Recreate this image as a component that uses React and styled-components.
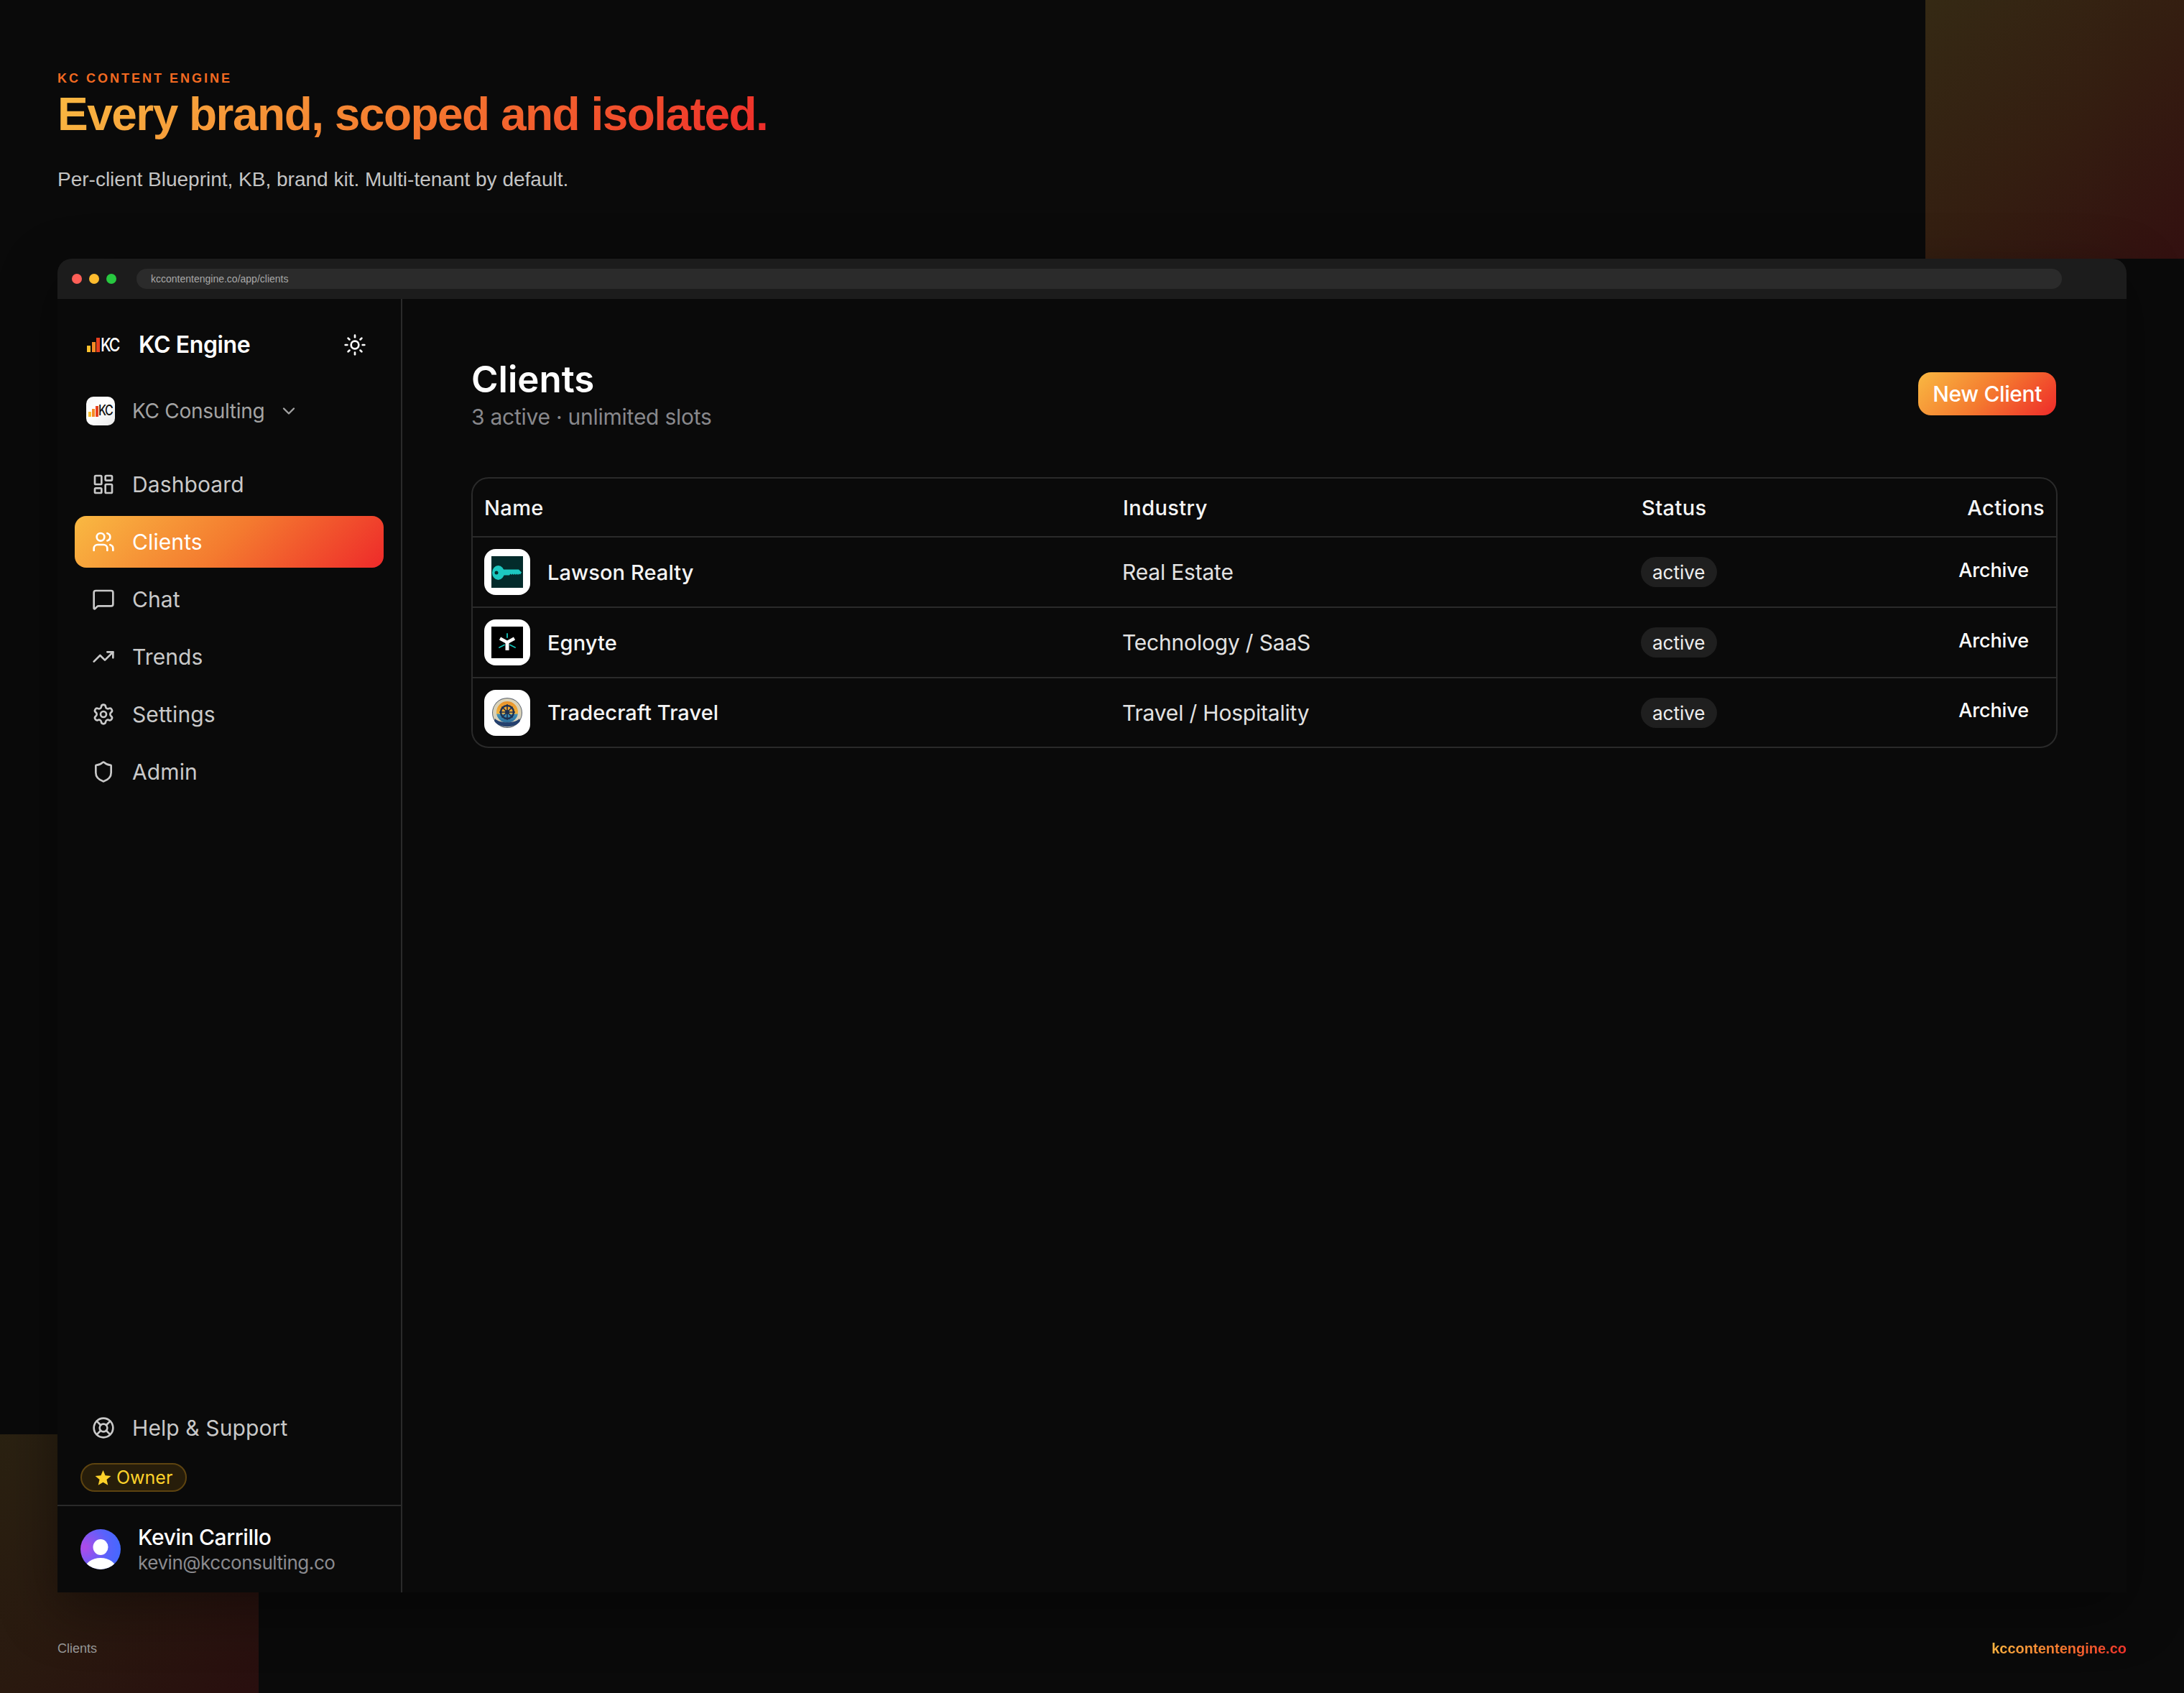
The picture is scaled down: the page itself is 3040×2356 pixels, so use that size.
import styled, { createGlobalStyle } from "styled-components";
import {
  ChevronDown,
  LayoutDashboard,
  LifeBuoy,
  MessageSquare,
  Settings,
  Shield,
  Sun,
  TrendingUp,
  Users,
} from "lucide-react";

const BRAND_GRADIENT = "linear-gradient(135deg, #f9b942 0%, #f47a2f 50%, #ee2a2a 100%)";
const UI_FONT = `Inter, "Noto Sans", sans-serif`;
const PAGE_FONT = `"Liberation Sans", Arial, sans-serif`;

const GlobalStyle = createGlobalStyle`
  * {
    box-sizing: border-box;
  }

  html,
  body {
    margin: 0;
    padding: 0;
    background-color: #0a0a0a;
  }
`;

const Stage = styled.div`
  position: relative;
  width: 3040px;
  height: 2356px;
  overflow: hidden;
  background-color: #0a0a0a;
  display: flex;
  flex-direction: column;
`;

// faint brand squares sitting behind the window
const GlowSquare = styled.div`
  position: absolute;
  width: 360px;
  height: 360px;
  background-image: ${BRAND_GRADIENT};
  opacity: ${(p) => (p.$corner === "top" ? 0.18 : 0.135)};
  ${(p) => (p.$corner === "top" ? "top: 0; right: 0;" : "bottom: 0; left: 0;")}
`;

//------------------------------------------
const Intro = styled.header`
  position: relative;
  height: 360px;
  padding: 98px 80px 0;
  font-family: ${PAGE_FONT};
`;

const Eyebrow = styled.div`
  font-size: 18px;
  line-height: 22px;
  font-weight: 700;
  letter-spacing: 3px;
  color: #f26a21;
`;

const Headline = styled.h1`
  display: inline-block;
  margin: 3px 0 0;
  font-size: 64px;
  line-height: 72px;
  font-weight: 700;
  letter-spacing: -1.52px;
  background-image: ${BRAND_GRADIENT};
  -webkit-background-clip: text;
  background-clip: text;
  color: transparent;
`;

const Lead = styled.p`
  margin: 35px 0 0;
  font-size: 28px;
  line-height: 40px;
  color: #c4c4c4;
`;

//------------------------------------------
const BrowserWindow = styled.div`
  position: relative;
  margin: 0 80px;
  height: 1856px;
  display: flex;
  flex-direction: column;
  background-color: #0a0a0a;
  border-radius: 20px 20px 0 0;
  box-shadow: 0 24px 80px rgba(0, 0, 0, 0.4);
`;

const TitleBar = styled.div`
  height: 56px;
  flex: none;
  display: flex;
  align-items: center;
  gap: 10px;
  padding: 0 90px 0 20px;
  background-color: #1c1c1c;
  border-radius: 20px 20px 0 0;
`;

const Dot = styled.span`
  width: 14px;
  height: 14px;
  border-radius: 50%;
  background-color: ${(p) => p.$color};
`;

const UrlBar = styled.div`
  flex: 1;
  height: 28px;
  margin-left: 18px;
  padding-left: 20px;
  border-radius: 14px;
  background-color: #2b2b2b;
  font-family: ${PAGE_FONT};
  font-size: 14px;
  line-height: 29px;
  color: #a8a8a8;
`;

const AppBody = styled.div`
  flex: 1;
  min-height: 0;
  display: flex;
  font-family: ${UI_FONT};
`;

//------------------------------------------
const Sidebar = styled.aside`
  width: 480px;
  flex: none;
  display: flex;
  flex-direction: column;
  border-right: 2px solid #2a2a2a;
`;

const BrandRow = styled.div`
  height: 40px;
  margin-top: 44px;
  padding: 0 48px 0 41px;
  display: flex;
  align-items: center;
`;

const BrandName = styled.span`
  margin-left: 27px;
  flex: 1;
  font-size: 32px;
  line-height: 38px;
  font-weight: 600;
  letter-spacing: -0.4px;
  color: #ffffff;
`;

const Mark = styled.div`
  position: relative;
  flex: none;
  width: ${(p) => 45 * p.$scale}px;
  height: ${(p) => 20 * p.$scale}px;
  display: flex;
  align-items: flex-end;
  gap: ${(p) => 1.6 * p.$scale}px;
`;

const MarkBar = styled.span`
  width: ${(p) => 5 * p.$scale}px;
  height: ${(p) => p.$height * p.$scale}px;
  background-color: ${(p) => p.$color};
`;

const MarkLetters = styled.span`
  position: absolute;
  left: ${(p) => 18.5 * p.$scale}px;
  top: 50%;
  font-size: ${(p) => 26 * p.$scale}px;
  line-height: 1;
  font-weight: 500;
  letter-spacing: ${(p) => -2.5 * p.$scale}px;
  color: ${(p) => p.$color};
  transform: translateY(-50%) scaleX(0.82);
  transform-origin: left center;
`;

const WorkspaceRow = styled.div`
  height: 40px;
  margin-top: 52px;
  padding-left: 40px;
  display: flex;
  align-items: center;
  color: #a3a3a3;
`;

const WorkspaceIcon = styled.div`
  width: 40px;
  height: 40px;
  border-radius: 10px;
  display: flex;
  align-items: center;
  justify-content: center;
  background-image: linear-gradient(135deg, #f7f7f7 0%, #ffffff 45%, #e9e9e9 100%);
`;

const WorkspaceName = styled.span`
  margin: 0 20px 0 24px;
  font-size: 28px;
  letter-spacing: -0.3px;
`;

const NavList = styled.nav`
  margin-top: 46px;
  padding: 0 24px;
  display: flex;
  flex-direction: column;
  gap: 8px;
`;

const BottomNav = styled(NavList)`
  margin-top: 0;
`;

const NavItem = styled.a`
  height: 72px;
  padding-left: 24px;
  display: flex;
  align-items: center;
  gap: 24px;
  border-radius: 16px;
  font-size: 30px;
  letter-spacing: 0.1px;
  color: ${(p) => (p.$active ? "#ffffff" : "#c9c9c9")};
  background-image: ${(p) => (p.$active ? BRAND_GRADIENT : "none")};
`;

const SidebarBottom = styled.div`
  margin-top: auto;
`;

const OwnerBadge = styled.div`
  width: 148px;
  height: 40px;
  margin: 13px 0 18px 32px;
  display: flex;
  align-items: center;
  gap: 7px;
  padding-left: 18px;
  border: 2px solid #5e4410;
  border-radius: 20px;
  background-color: #271d0a;
  font-size: 25px;
  color: #fcd12a;
`;

const UserRow = styled.div`
  height: 122px;
  padding-left: 32px;
  display: flex;
  align-items: center;
  gap: 24px;
  border-top: 2px solid #2a2a2a;
`;

const UserText = styled.div`
  display: flex;
  flex-direction: column;
`;

const UserName = styled.span`
  font-size: 30px;
  line-height: 38px;
  font-weight: 450;
  letter-spacing: -0.4px;
  color: #ffffff;
`;

const UserMail = styled.span`
  font-size: 26px;
  line-height: 34px;
  letter-spacing: -0.45px;
  color: #8b8b8f;
`;

//------------------------------------------
const Main = styled.main`
  flex: 1;
  min-width: 0;
  padding: 84px 96px 0;
`;

const PageHeader = styled.div`
  display: flex;
  align-items: flex-start;
  justify-content: space-between;
  padding-right: 2px;
`;

const PageTitle = styled.h2`
  margin: 0;
  font-size: 51px;
  line-height: 56px;
  font-weight: 600;
  color: #ffffff;
`;

const PageSub = styled.p`
  margin: 4px 0 0;
  font-size: 30px;
  line-height: 40px;
  letter-spacing: -0.25px;
  color: #88888c;
`;

const NewButton = styled.button`
  height: 60px;
  margin-top: 18px;
  padding: 0 20px;
  border: none;
  border-radius: 18px;
  background-image: ${BRAND_GRADIENT};
  font-family: ${UI_FONT};
  font-size: 30px;
  font-weight: 450;
  letter-spacing: -0.4px;
  color: #ffffff;
`;

const TableCard = styled.div`
  margin-top: 64px;
  border: 2px solid #2a2a2a;
  border-radius: 24px;
`;

const TableGrid = styled.div`
  display: grid;
  grid-template-columns: 889px 722px 1fr 300px;
  align-items: center;
  height: ${(p) => p.$height}px;
  border-bottom: ${(p) => (p.$last ? "none" : "2px solid #2a2a2a")};
`;

const HeadCell = styled.div`
  padding-left: 16px;
  padding-right: 16px;
  font-size: 29px;
  font-weight: 450;
  letter-spacing: 0.4px;
  color: #f5f5f5;
  text-align: ${(p) => (p.$right ? "right" : "left")};
`;

const NameCell = styled.div`
  padding-left: 16px;
  display: flex;
  align-items: center;
  gap: 24px;
  font-size: 29px;
  font-weight: 450;
  letter-spacing: 0.1px;
  color: #f5f5f5;
`;

const ClientLogo = styled.div`
  width: 64px;
  height: 64px;
  padding: 10px;
  border-radius: 16px;
  background-color: #ffffff;
  display: flex;
`;

const IndustryCell = styled.div`
  padding-left: 15px;
  font-size: 30px;
  letter-spacing: -0.2px;
  color: #e2e2e2;
`;

const StatusCell = styled.div`
  padding-left: 15px;
`;

const StatusPill = styled.span`
  display: inline-block;
  height: 42px;
  padding: 0 16px;
  border-radius: 21px;
  background-color: #1f1f1f;
  font-size: 26px;
  line-height: 44px;
  color: #eeeeee;
`;

const ArchiveCell = styled.div`
  padding-right: 38px;
  margin-bottom: 6px;
  text-align: right;
  font-size: 27px;
  font-weight: 450;
  letter-spacing: -0.1px;
  color: #ffffff;
`;

//------------------------------------------
const Footer = styled.footer`
  position: relative;
  flex: 1;
  padding: 16px 80px 0;
  display: flex;
  align-items: center;
  justify-content: space-between;
  font-family: ${PAGE_FONT};
`;

const FooterLabel = styled.span`
  font-size: 18px;
  color: #969696;
`;

const FooterLink = styled.span`
  font-size: 20px;
  font-weight: 700;
  background-image: ${BRAND_GRADIENT};
  -webkit-background-clip: text;
  background-clip: text;
  color: transparent;
`;

//======================================================

const KcMark = ({ scale = 1, color = "#ffffff" }) => (
  <Mark $scale={scale}>
    <MarkBar $scale={scale} $height={9} $color="#fbc02d" />
    <MarkBar $scale={scale} $height={14} $color="#f58a25" />
    <MarkBar $scale={scale} $height={20} $color="#e8401f" />
    <MarkLetters $scale={scale} $color={color}>
      KC
    </MarkLetters>
  </Mark>
);

const KeyLogo = () => (
  <svg width="44" height="44" viewBox="0 0 44 44">
    <rect width="44" height="44" fill="#032b2b" />
    <ellipse cx="9.5" cy="23" rx="8.5" ry="10" fill="#1cc8c0" />
    <path
      d="M16 18.5h22l4 4-2 3-1.500-1-1.500 1.500-1.500-1.500-1.500 1.500-1.500-1.500-1.500 1.500-1.500-1.500-1.500 1.500-1.500-1.500-1.500 2H16z"
      fill="#1cc8c0"
    />
    <circle cx="7" cy="23" r="2.500" fill="#032b2b" />
  </svg>
);

const EgnyteLogo = () => (
  <svg width="44" height="44" viewBox="0 0 44 44">
    <rect width="44" height="44" fill="#000000" />
    <path d="M22 33V21" stroke="#ffffff" strokeWidth="5" fill="none" />
    <path d="M12 16.500L22 22l10-5.500" stroke="#ffffff" strokeWidth="4.500" fill="none" />
    <path
      d="M22 10v5M11 29l7-3.500M33 29l-7-3.500"
      stroke="#14c4ba"
      strokeWidth="1.800"
      strokeLinecap="round"
    />
  </svg>
);

const TradecraftLogo = () => (
  <svg width="44" height="44" viewBox="0 0 44 44">
    <defs>
      <linearGradient id="tcSky" x1="0" y1="0" x2="0" y2="1">
        <stop offset="0" stopColor="#e8912a" />
        <stop offset="0.55" stopColor="#f3b43c" />
        <stop offset="0.62" stopColor="#3f8fb8" />
        <stop offset="1" stopColor="#2a6a96" />
      </linearGradient>
    </defs>
    <circle cx="22" cy="22" r="21" fill="#5a6270" />
    <circle cx="22" cy="22" r="20" fill="#d9d2b8" />
    <circle cx="22" cy="21" r="15" fill="url(#tcSky)" />
    <circle cx="22" cy="21" r="9" fill="none" stroke="#1e3150" strokeWidth="2.500" />
    <circle cx="22" cy="21" r="3" fill="#1e3150" />
    <path
      d="M22 10v22M11 21h22M14.500 13.500l15 15M29.500 13.500l-15 15"
      stroke="#1e3150"
      strokeWidth="1.600"
    />
    <path d="M5 30c6 7 28 7 34 0l1 3c-5 11-31 11-36 0z" fill="#24406e" />
  </svg>
);

const UserAvatar = () => (
  <svg width="56" height="56" viewBox="0 0 56 56" style={{ flex: "none" }}>
    <defs>
      <radialGradient id="avatarBg" cx="0.1" cy="0.45" r="0.9">
        <stop offset="0" stopColor="#b04ae8" />
        <stop offset="0.65" stopColor="#5a62fb" />
        <stop offset="1" stopColor="#4468ff" />
      </radialGradient>
      <clipPath id="avatarClip">
        <circle cx="28" cy="28" r="28" />
      </clipPath>
    </defs>
    <g clipPath="url(#avatarClip)">
      <rect width="56" height="56" fill="url(#avatarBg)" />
      <ellipse cx="28" cy="25" rx="10.500" ry="11" fill="#ffffff" />
      <ellipse cx="28" cy="56" rx="22" ry="16" fill="#ffffff" />
    </g>
  </svg>
);

const StarIcon = () => (
  <svg width="23" height="23" viewBox="0 0 24 24" fill="#fcd12a">
    <path d="M12 1l3.200 7.600 8.200.7-6.200 5.400 1.900 8L12 18.500 4.900 22.700l1.900-8L.6 9.300l8.200-.7z" />
  </svg>
);

const navItems = [
  { label: "Dashboard", Icon: LayoutDashboard },
  { label: "Clients", Icon: Users, active: true },
  { label: "Chat", Icon: MessageSquare },
  { label: "Trends", Icon: TrendingUp },
  { label: "Settings", Icon: Settings },
  { label: "Admin", Icon: Shield },
];

const clients = [
  { name: "Lawson Realty", industry: "Real Estate", Logo: KeyLogo },
  { name: "Egnyte", industry: "Technology / SaaS", Logo: EgnyteLogo },
  { name: "Tradecraft Travel", industry: "Travel / Hospitality", Logo: TradecraftLogo },
];

const App = () => {
  return (
    <>
      <GlobalStyle />
      <Stage>
        <GlowSquare $corner="top" />
        <GlowSquare $corner="bottom" />

        <Intro>
          <Eyebrow>KC CONTENT ENGINE</Eyebrow>
          <Headline>Every brand, scoped and isolated.</Headline>
          <Lead>Per-client Blueprint, KB, brand kit. Multi-tenant by default.</Lead>
        </Intro>

        <BrowserWindow>
          <TitleBar>
            <Dot $color="#ff5f57" />
            <Dot $color="#febc2e" />
            <Dot $color="#28c840" />
            <UrlBar>kccontentengine.co/app/clients</UrlBar>
          </TitleBar>

          <AppBody>
            <Sidebar>
              <BrandRow>
                <KcMark />
                <BrandName>KC Engine</BrandName>
                <Sun size={32} color="#ffffff" />
              </BrandRow>

              <WorkspaceRow>
                <WorkspaceIcon>
                  <KcMark scale={0.75} color="#111111" />
                </WorkspaceIcon>
                <WorkspaceName>KC Consulting</WorkspaceName>
                <ChevronDown size={28} />
              </WorkspaceRow>

              <NavList>
                {navItems.map(({ label, Icon, active }) => (
                  <NavItem key={label} $active={active}>
                    <Icon size={32} />
                    {label}
                  </NavItem>
                ))}
              </NavList>

              <SidebarBottom>
                <BottomNav>
                  <NavItem>
                    <LifeBuoy size={32} />
                    Help &amp; Support
                  </NavItem>
                </BottomNav>
                <OwnerBadge>
                  <StarIcon />
                  Owner
                </OwnerBadge>
                <UserRow>
                  <UserAvatar />
                  <UserText>
                    <UserName>Kevin Carrillo</UserName>
                    <UserMail>kevin@kcconsulting.co</UserMail>
                  </UserText>
                </UserRow>
              </SidebarBottom>
            </Sidebar>

            <Main>
              <PageHeader>
                <div>
                  <PageTitle>Clients</PageTitle>
                  <PageSub>3 active · unlimited slots</PageSub>
                </div>
                <NewButton>New Client</NewButton>
              </PageHeader>

              <TableCard>
                <TableGrid $height={82}>
                  <HeadCell>Name</HeadCell>
                  <HeadCell>Industry</HeadCell>
                  <HeadCell>Status</HeadCell>
                  <HeadCell $right>Actions</HeadCell>
                </TableGrid>
                {clients.map(({ name, industry, Logo }, i) => (
                  <TableGrid key={name} $height={i === 2 ? 95 : 98} $last={i === 2}>
                    <NameCell>
                      <ClientLogo>
                        <Logo />
                      </ClientLogo>
                      {name}
                    </NameCell>
                    <IndustryCell>{industry}</IndustryCell>
                    <StatusCell>
                      <StatusPill>active</StatusPill>
                    </StatusCell>
                    <ArchiveCell>Archive</ArchiveCell>
                  </TableGrid>
                ))}
              </TableCard>
            </Main>
          </AppBody>
        </BrowserWindow>

        <Footer>
          <FooterLabel>Clients</FooterLabel>
          <FooterLink>kccontentengine.co</FooterLink>
        </Footer>
      </Stage>
    </>
  );
};

export default App;
